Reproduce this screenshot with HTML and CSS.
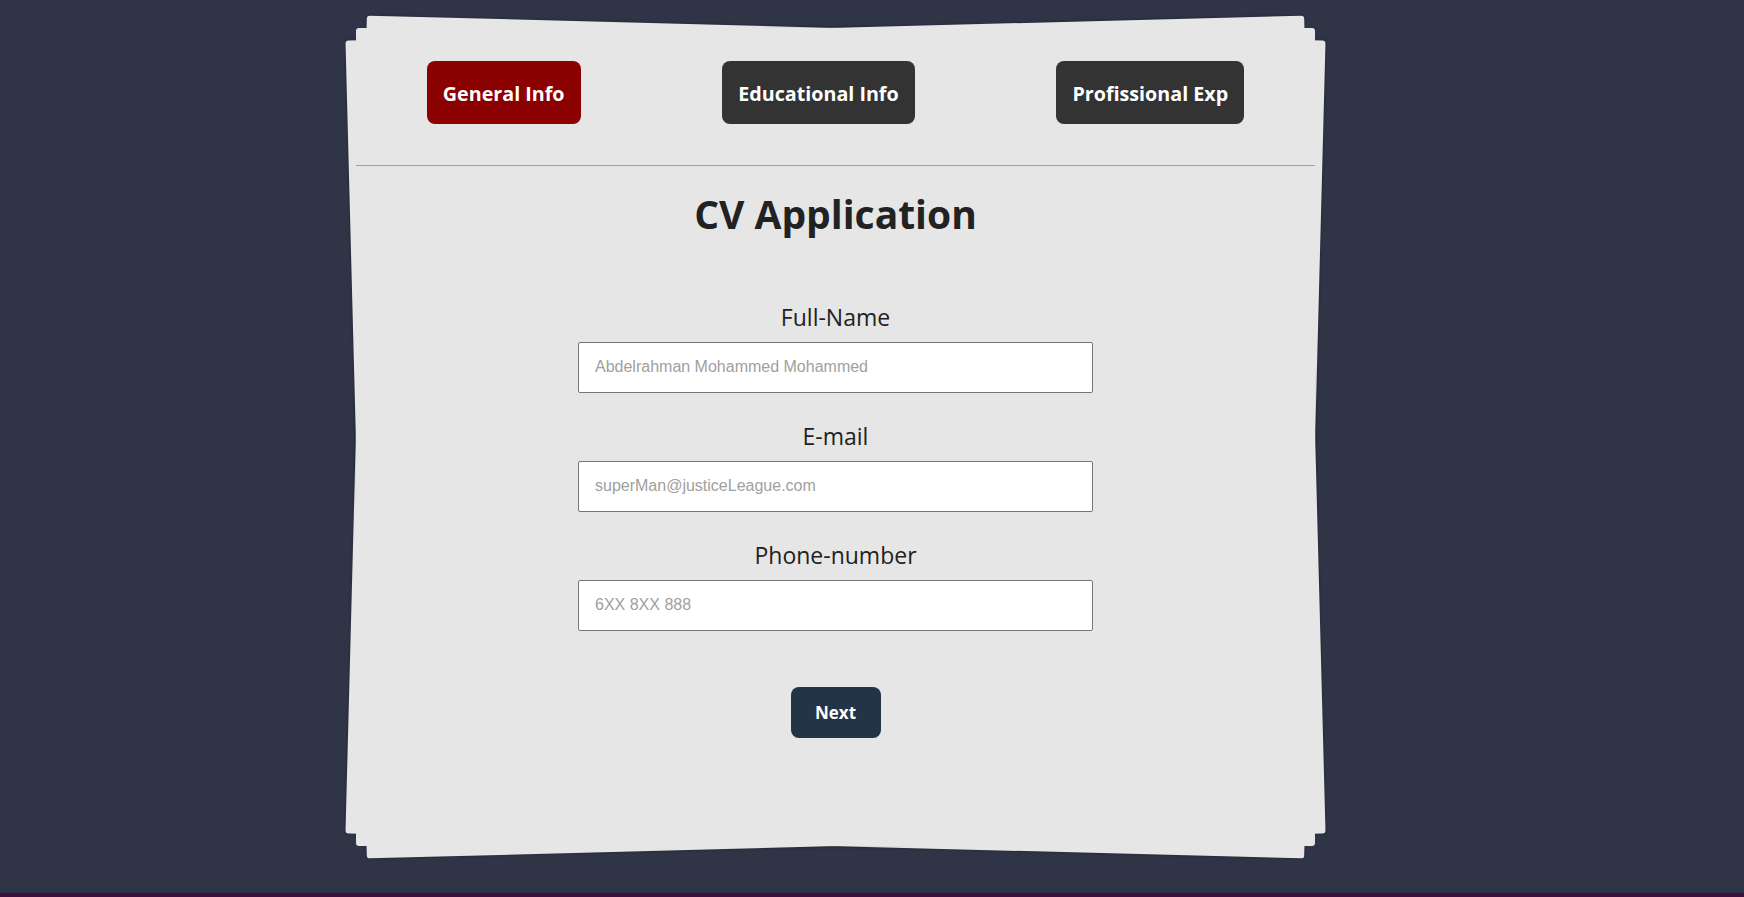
FILE: index.html
```html
<!DOCTYPE html>
<html lang="en">
<head>
<meta charset="utf-8">
<title>CV Application</title>
<link rel="stylesheet" href="styles.css">
</head>
<body>
<main class="stage">
  <section class="card">
    <nav class="tabs">
      <button type="button" class="tab tab-active">General Info</button>
      <button type="button" class="tab">Educational Info</button>
      <button type="button" class="tab">Profissional Exp</button>
    </nav>
    <hr class="divider">
    <h1 class="title">CV Application</h1>
    <form class="form">
      <div class="field">
        <label class="field-label" for="fullname">Full-Name</label>
        <input class="field-input" id="fullname" type="text" placeholder="Abdelrahman Mohammed Mohammed">
      </div>
      <div class="field">
        <label class="field-label" for="email">E-mail</label>
        <input class="field-input" id="email" type="email" placeholder="superMan@justiceLeague.com">
      </div>
      <div class="field">
        <label class="field-label" for="phone">Phone-number</label>
        <input class="field-input" id="phone" type="tel" placeholder="6XX 8XX 888">
      </div>
      <button type="button" class="next">Next</button>
    </form>
  </section>
</main>
</body>
</html>
```

FILE: styles.css
```css
html {
  background: #3b0f3f;
}

body {
  margin: 0;
  min-height: calc(100vh - 4px);
  background: #2f3546;
  position: relative;
  z-index: 0;
  font-family: "Open Sans", "Noto Sans", sans-serif;
}

.stage {
  display: flex;
  justify-content: center;
  padding: 28px 73px 0 0;
}

.card {
  position: relative;
  width: 959px;
  height: 818px;
  box-sizing: border-box;
  padding-top: 33px;
  background: #e6e6e6;
  border-radius: 3px;
  display: flex;
  flex-direction: column;
  align-items: center;
}

.card::before,
.card::after {
  content: "";
  position: absolute;
  inset: 0;
  background: #e6e6e6;
  border-radius: 3px;
  box-shadow: 0 0 3px rgba(0, 0, 0, 0.35);
  z-index: -1;
}

.card::before {
  transform: rotate(1.5deg);
}

.card::after {
  transform: rotate(-1.5deg);
}

.tabs {
  align-self: stretch;
  display: flex;
  justify-content: space-around;
}

.tab {
  border: 0;
  border-radius: 8px;
  background: #333333;
  color: #ffffff;
  font-family: "Open Sans", "Noto Sans", sans-serif;
  font-weight: 700;
  font-size: 19.7px;
  line-height: 27px;
  padding: 19px 16px 17px;
}

.tab-active {
  background: #8b0000;
}

.divider {
  align-self: stretch;
  margin: 41px 0 0;
  height: 0;
  border: 0;
  border-top: 1px solid #a0a0a0;
}

.title {
  margin: 25px 0 0;
  font-size: 39px;
  line-height: 1.2;
  font-weight: 700;
  color: #222222;
}

.form {
  margin-top: 63px;
  display: flex;
  flex-direction: column;
  align-items: center;
  gap: 27px;
}

.field {
  display: flex;
  flex-direction: column;
  align-items: center;
  gap: 9px;
}

.field-label {
  font-size: 23px;
  line-height: 32px;
  color: #222222;
}

.field-input {
  width: 515px;
  height: 51px;
  box-sizing: border-box;
  padding: 0 16px;
  border: 1px solid #767676;
  border-radius: 2px;
  background: #ffffff;
  font-family: "Liberation Sans", Arial, sans-serif;
  font-size: 16px;
  color: #222222;
}

.field-input::placeholder {
  color: #a0a0a0;
}

.next {
  margin-top: 29px;
  width: 90px;
  height: 51px;
  border: 0;
  border-radius: 8px;
  background: #243447;
  color: #ffffff;
  font-family: "Open Sans", "Noto Sans", sans-serif;
  font-weight: 700;
  font-size: 17px;
}
```
